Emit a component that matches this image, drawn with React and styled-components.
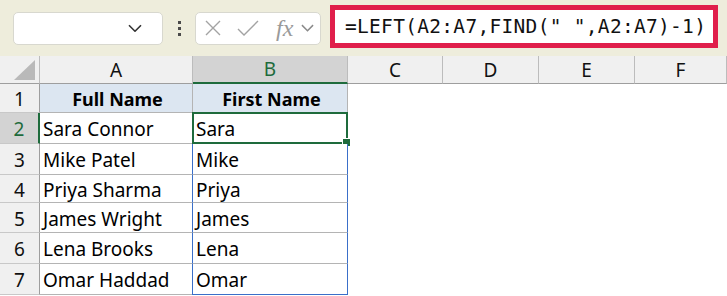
import React from 'react';
import styled, { createGlobalStyle } from 'styled-components';

const Global = createGlobalStyle`
  body {
    margin: 0;
    background: #ffffff;
    font-family: "Noto Sans", "Open Sans", sans-serif;
  }
`;

const Page = styled.div`
  width: 727px;
  height: 296px;
  overflow: hidden;
  background: #ffffff;
`;

const Toolbar = styled.div`
  height: 56px;
  background: #eeeddc;
  display: flex;
  align-items: center;
  padding-left: 13px;
  box-sizing: border-box;
`;

const NameBox = styled.div`
  width: 150px;
  height: 33px;
  box-sizing: border-box;
  background: #fff;
  border: 1px solid #d8d8cf;
  border-radius: 5px;
  display: flex;
  align-items: center;
  justify-content: flex-end;
  padding-right: 20px;
`;

const Dots = styled.div`
  width: 32px;
  display: flex;
  flex-direction: column;
  align-items: center;
  gap: 3px;
  span {
    width: 3px;
    height: 3px;
    background: #4a4a4a;
  }
`;

const ButtonBox = styled.div`
  width: 126px;
  height: 33px;
  box-sizing: border-box;
  background: #fff;
  border: 1px solid #d8d8cf;
  border-radius: 5px;
  display: flex;
  align-items: center;
  padding-left: 8px;
  gap: 15px;
`;

const Fx = styled.span`
  font-family: "Liberation Serif", serif;
  font-style: italic;
  font-size: 24px;
  color: #9a9a9a;
  margin-left: 2px;
  margin-right: -7px;
  line-height: 1;
`;

const FormulaBar = styled.div`
  margin-left: 9px;
  width: 388px;
  height: 43px;
  margin-top: -4px;
  box-sizing: border-box;
  border: 5px solid #e01f4b;
  background: #fff;
  display: flex;
  align-items: center;
  padding-left: 10px;
  font-family: "DejaVu Sans Mono", "Liberation Mono", monospace;
  font-size: 19.5px;
  color: #111;
  letter-spacing: 0.3px;
`;

const Sheet = styled.div`
  display: grid;
  grid-template-columns: 40px 153px 155px 95px 96px 96px 1fr;
  grid-template-rows: 28px 29px 31px 31px 28px 30px 31px 31px;
`;

const Corner = styled.div`
  background: #f0f0f0;
  border-right: 1px solid #bcbcbc;
  border-bottom: 1px solid #9e9e9e;
  position: relative;
  &::after {
    content: '';
    position: absolute;
    right: 4px;
    bottom: 3px;
    width: 0;
    height: 0;
    border-left: 21px solid transparent;
    border-bottom: 20px solid #b9b9b9;
  }
`;

const ColHead = styled.div`
  background: ${(p) => (p.$active ? '#d3d3d3' : '#f0f0f0')};
  color: ${(p) => (p.$active ? '#1e6b3c' : '#111')};
  border-right: 1px solid #bcbcbc;
  border-bottom: ${(p) => (p.$active ? '2px solid #1e6b3c' : '1px solid #9e9e9e')};
  display: flex;
  align-items: center;
  justify-content: center;
  font-size: 19px;
  box-sizing: border-box;
`;

const RowHead = styled.div`
  background: ${(p) => (p.$active ? '#d3d3d3' : '#f0f0f0')};
  color: ${(p) => (p.$active ? '#1e6b3c' : '#111')};
  border-right: ${(p) => (p.$active ? '2px solid #1e6b3c' : '1px solid #9e9e9e')};
  border-bottom: 1px solid #c8c8c8;
  display: flex;
  align-items: center;
  justify-content: center;
  font-size: 19px;
  padding-top: 2px;
  box-sizing: border-box;
`;

const Cell = styled.div`
  position: relative;
  box-sizing: border-box;
  background: ${(p) => (p.$head ? '#dce6f1' : '#fff')};
  font-weight: ${(p) => (p.$head ? 700 : 400)};
  font-size: ${(p) => (p.$head ? '18px' : '19px')};
  justify-content: ${(p) => (p.$head ? 'center' : 'flex-start')};
  border-right: 1px solid ${(p) => (p.$spill ? '#3a6fc9' : '#b4b4b4')};
  border-bottom: 1px solid ${(p) => (p.$last && p.$spill ? '#3a6fc9' : '#b4b4b4')};
  border-left: ${(p) => (p.$spill ? '1px solid #3a6fc9' : 'none')};
  margin-left: ${(p) => (p.$spill ? '-1px' : '0')};
  display: flex;
  align-items: center;
  padding-left: 3px;
  padding-top: 2px;
  color: #000;
  white-space: nowrap;
`;

const Blank = styled.div`
  background: #fff;
`;

const Selection = styled.div`
  position: absolute;
  left: -1px;
  top: -1px;
  right: -1px;
  bottom: -1px;
  border: 2px solid #1e6b3c;
  pointer-events: none;
  &::after {
    content: '';
    position: absolute;
    right: -5px;
    bottom: -5px;
    width: 7px;
    height: 7px;
    background: #1e6b3c;
    border: 1px solid #fff;
  }
`;

const Chevron = ({ size = 14, color = '#333' }) => (
  <svg width={size} height={size * 0.6} viewBox="0 0 14 8" fill="none">
    <path d="M1 1l6 6 6-6" stroke={color} strokeWidth="1.6" />
  </svg>
);

const rows = [
  ['Sara Connor', 'Sara'],
  ['Mike Patel', 'Mike'],
  ['Priya Sharma', 'Priya'],
  ['James Wright', 'James'],
  ['Lena Brooks', 'Lena'],
  ['Omar Haddad', 'Omar'],
];

const cols = ['A', 'B', 'C', 'D', 'E', 'F'];
const emptyCols = ['C', 'D', 'E', 'F'];

export default function App() {
  return (
    <Page>
      <Global />
      <Toolbar>
        <NameBox>
          <Chevron />
        </NameBox>
        <Dots>
          <span />
          <span />
          <span />
        </Dots>
        <ButtonBox>
          <svg width="18" height="18" viewBox="0 0 18 18">
            <path d="M2 2l14 14M16 2L2 16" stroke="#a3a3a3" strokeWidth="1.4" />
          </svg>
          <svg width="22" height="16" viewBox="0 0 22 16">
            <path d="M1 9l6 6L21 1" stroke="#a3a3a3" strokeWidth="1.4" fill="none" />
          </svg>
          <Fx>fx</Fx>
          <Chevron size={13} color="#8a8a8a" />
        </ButtonBox>
        <FormulaBar>=LEFT(A2:A7,FIND(" ",A2:A7)-1)</FormulaBar>
      </Toolbar>
      <Sheet>
        <Corner />
        {cols.map((c) => (
          <ColHead key={c} $active={c === 'B'}>
            {c}
          </ColHead>
        ))}
        <RowHead>1</RowHead>
        <Cell $head>Full Name</Cell>
        <Cell $head>First Name</Cell>
        {emptyCols.map((c) => (
          <Blank key={c} />
        ))}
        {rows.map(([full, first], i) => (
          <React.Fragment key={full}>
            <RowHead $active={i === 0}>{i + 2}</RowHead>
            <Cell>{full}</Cell>
            <Cell $spill $last={i === rows.length - 1}>
              {first}
              {i === 0 && <Selection />}
            </Cell>
            {emptyCols.map((c) => (
              <Blank key={c} />
            ))}
          </React.Fragment>
        ))}
      </Sheet>
    </Page>
  );
}
